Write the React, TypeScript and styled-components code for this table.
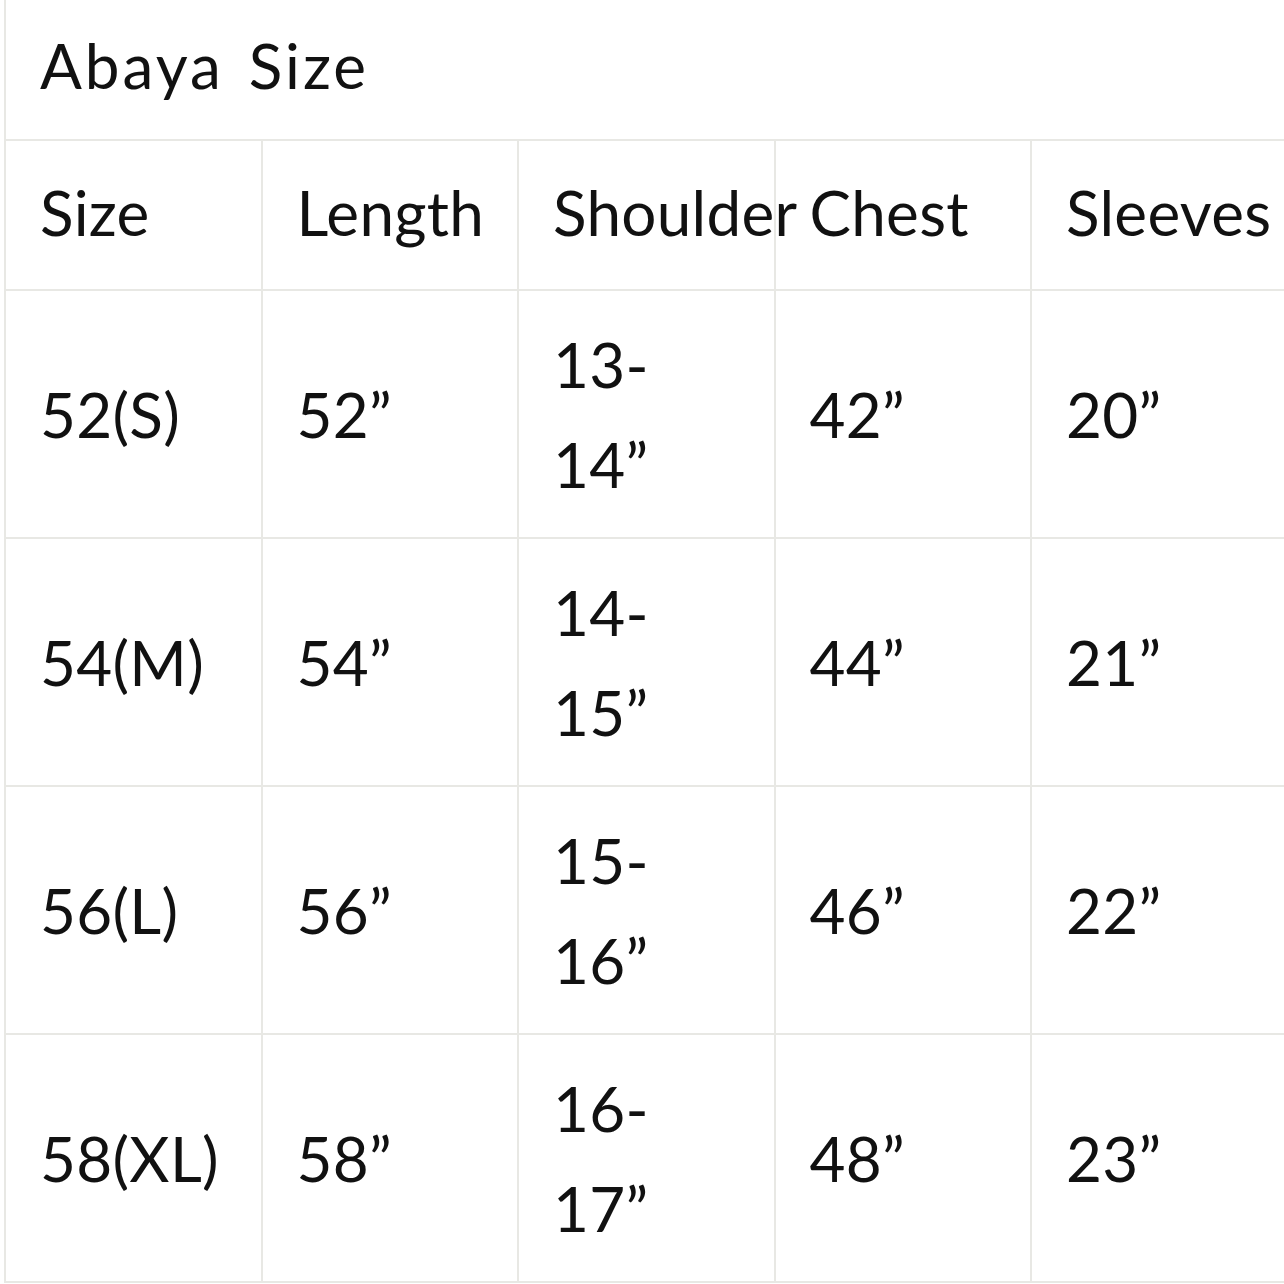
import React from 'react';
import styled, { createGlobalStyle } from 'styled-components';

const GlobalStyle = createGlobalStyle`
  html, body {
    margin: 0;
    padding: 0;
    background: #ffffff;
  }
  body {
    font-family: Lato, "Open Sans", sans-serif;
    color: #111111;
  }
`;

interface SizeRow {
  size: string;
  length: string;
  shoulder: [string, string];
  chest: string;
  sleeves: string;
}

const rows: SizeRow[] = [
  { size: '52(S)', length: '52”', shoulder: ['13-', '14”'], chest: '42”', sleeves: '20”' },
  { size: '54(M)', length: '54”', shoulder: ['14-', '15”'], chest: '44”', sleeves: '21”' },
  { size: '56(L)', length: '56”', shoulder: ['15-', '16”'], chest: '46”', sleeves: '22”' },
  { size: '58(XL)', length: '58”', shoulder: ['16-', '17”'], chest: '48”', sleeves: '23”' },
];

const headers = ['Size', 'Length', 'Shoulder', 'Chest', 'Sleeves'];

const App: React.FC = () => {
  return (
    <>
      <GlobalStyle />
      <Page>
        <Table>
          <colgroup>
            {headers.map(h => (
              <Col key={h} />
            ))}
          </colgroup>
          <tbody>
            <tr>
              <TitleCell colSpan={5}>Abaya Size</TitleCell>
            </tr>
            <tr>
              {headers.map(h => (
                <HeadCell key={h}>{h}</HeadCell>
              ))}
            </tr>
            {rows.map(r => (
              <tr key={r.size}>
                <Cell>{r.size}</Cell>
                <Cell>{r.length}</Cell>
                <Cell>
                  {r.shoulder[0]}
                  <br />
                  {r.shoulder[1]}
                </Cell>
                <Cell>{r.chest}</Cell>
                <Cell>{r.sleeves}</Cell>
              </tr>
            ))}
          </tbody>
        </Table>
      </Page>
    </>
  );
};

const Page = styled.div`
  width: 1284px;
  height: 1284px;
  overflow: hidden;
  padding-left: 4px;
  box-sizing: border-box;
`;

const Table = styled.table`
  border-collapse: collapse;
  table-layout: fixed;
  width: 1284px;
  font-size: 62px;
  line-height: 100px;
  letter-spacing: 0.3px;
`;

const Col = styled.col`
  width: 256.5px;
`;

const BaseCell = styled.td`
  border: 2px solid #e8e8e4;
  padding: 23px 35px 23px 34px;
  text-align: left;
  vertical-align: middle;
  white-space: nowrap;
  overflow: visible;
  font-weight: 400;
`;

const TitleCell = styled(BaseCell)`
  border-top: none;
  padding-top: 15px;
  padding-bottom: 24px;
  letter-spacing: 3px;
  word-spacing: 6px;
`;

const HeadCell = styled(BaseCell)`
  padding-top: 21px;
  padding-bottom: 27px;
`;

const Cell = styled(BaseCell)``;

export default App;
